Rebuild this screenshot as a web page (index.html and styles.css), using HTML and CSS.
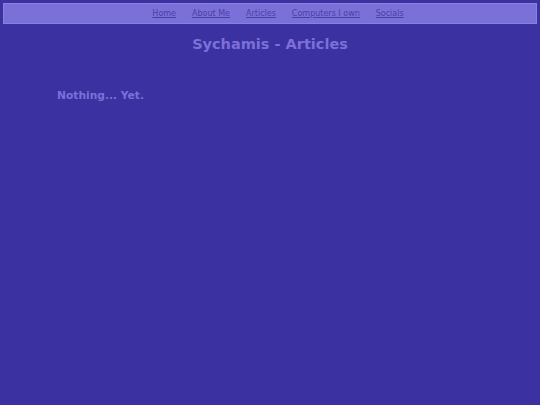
FILE: index.html
```html
<!DOCTYPE html>
<html>
<head>
<meta charset="utf-8">
<title>Sychamis - Articles</title>
<link rel="stylesheet" href="styles.css">
</head>
<body>
<nav class="nav">
  <a href="#">Home</a>
  <a href="#">About Me</a>
  <a href="#">Articles</a>
  <a href="#">Computers I own</a>
  <a href="#">Socials</a>
</nav>
<h1 class="title">Sychamis - Articles</h1>
<main class="content">
  <h2 class="note">Nothing... Yet.</h2>
</main>
</body>
</html>
```
FILE: styles.css
```css
html, body {
  background: #3c31a0;
}
body {
  margin: 3px;
  font-family: "DejaVu Sans", Verdana, sans-serif;
}
.nav {
  display: flex;
  justify-content: center;
  gap: 16px;
  padding-left: 16px;
  background: #7b70d8;
  border: 1px solid #8a80e0;
  height: 19px;
  align-items: center;
  font-size: 8px;
}
.nav a {
  color: #4a3fa8;
}
.title {
  margin: 12px 0 0;
  text-align: center;
  color: #7b70d8;
  font-size: 14.5px;
  font-weight: bold;
}
.content {
  padding: 0 54px;
}
.note {
  margin: 37px 0 0;
  color: #7b70d8;
  font-size: 10.7px;
  font-weight: bold;
}
```
